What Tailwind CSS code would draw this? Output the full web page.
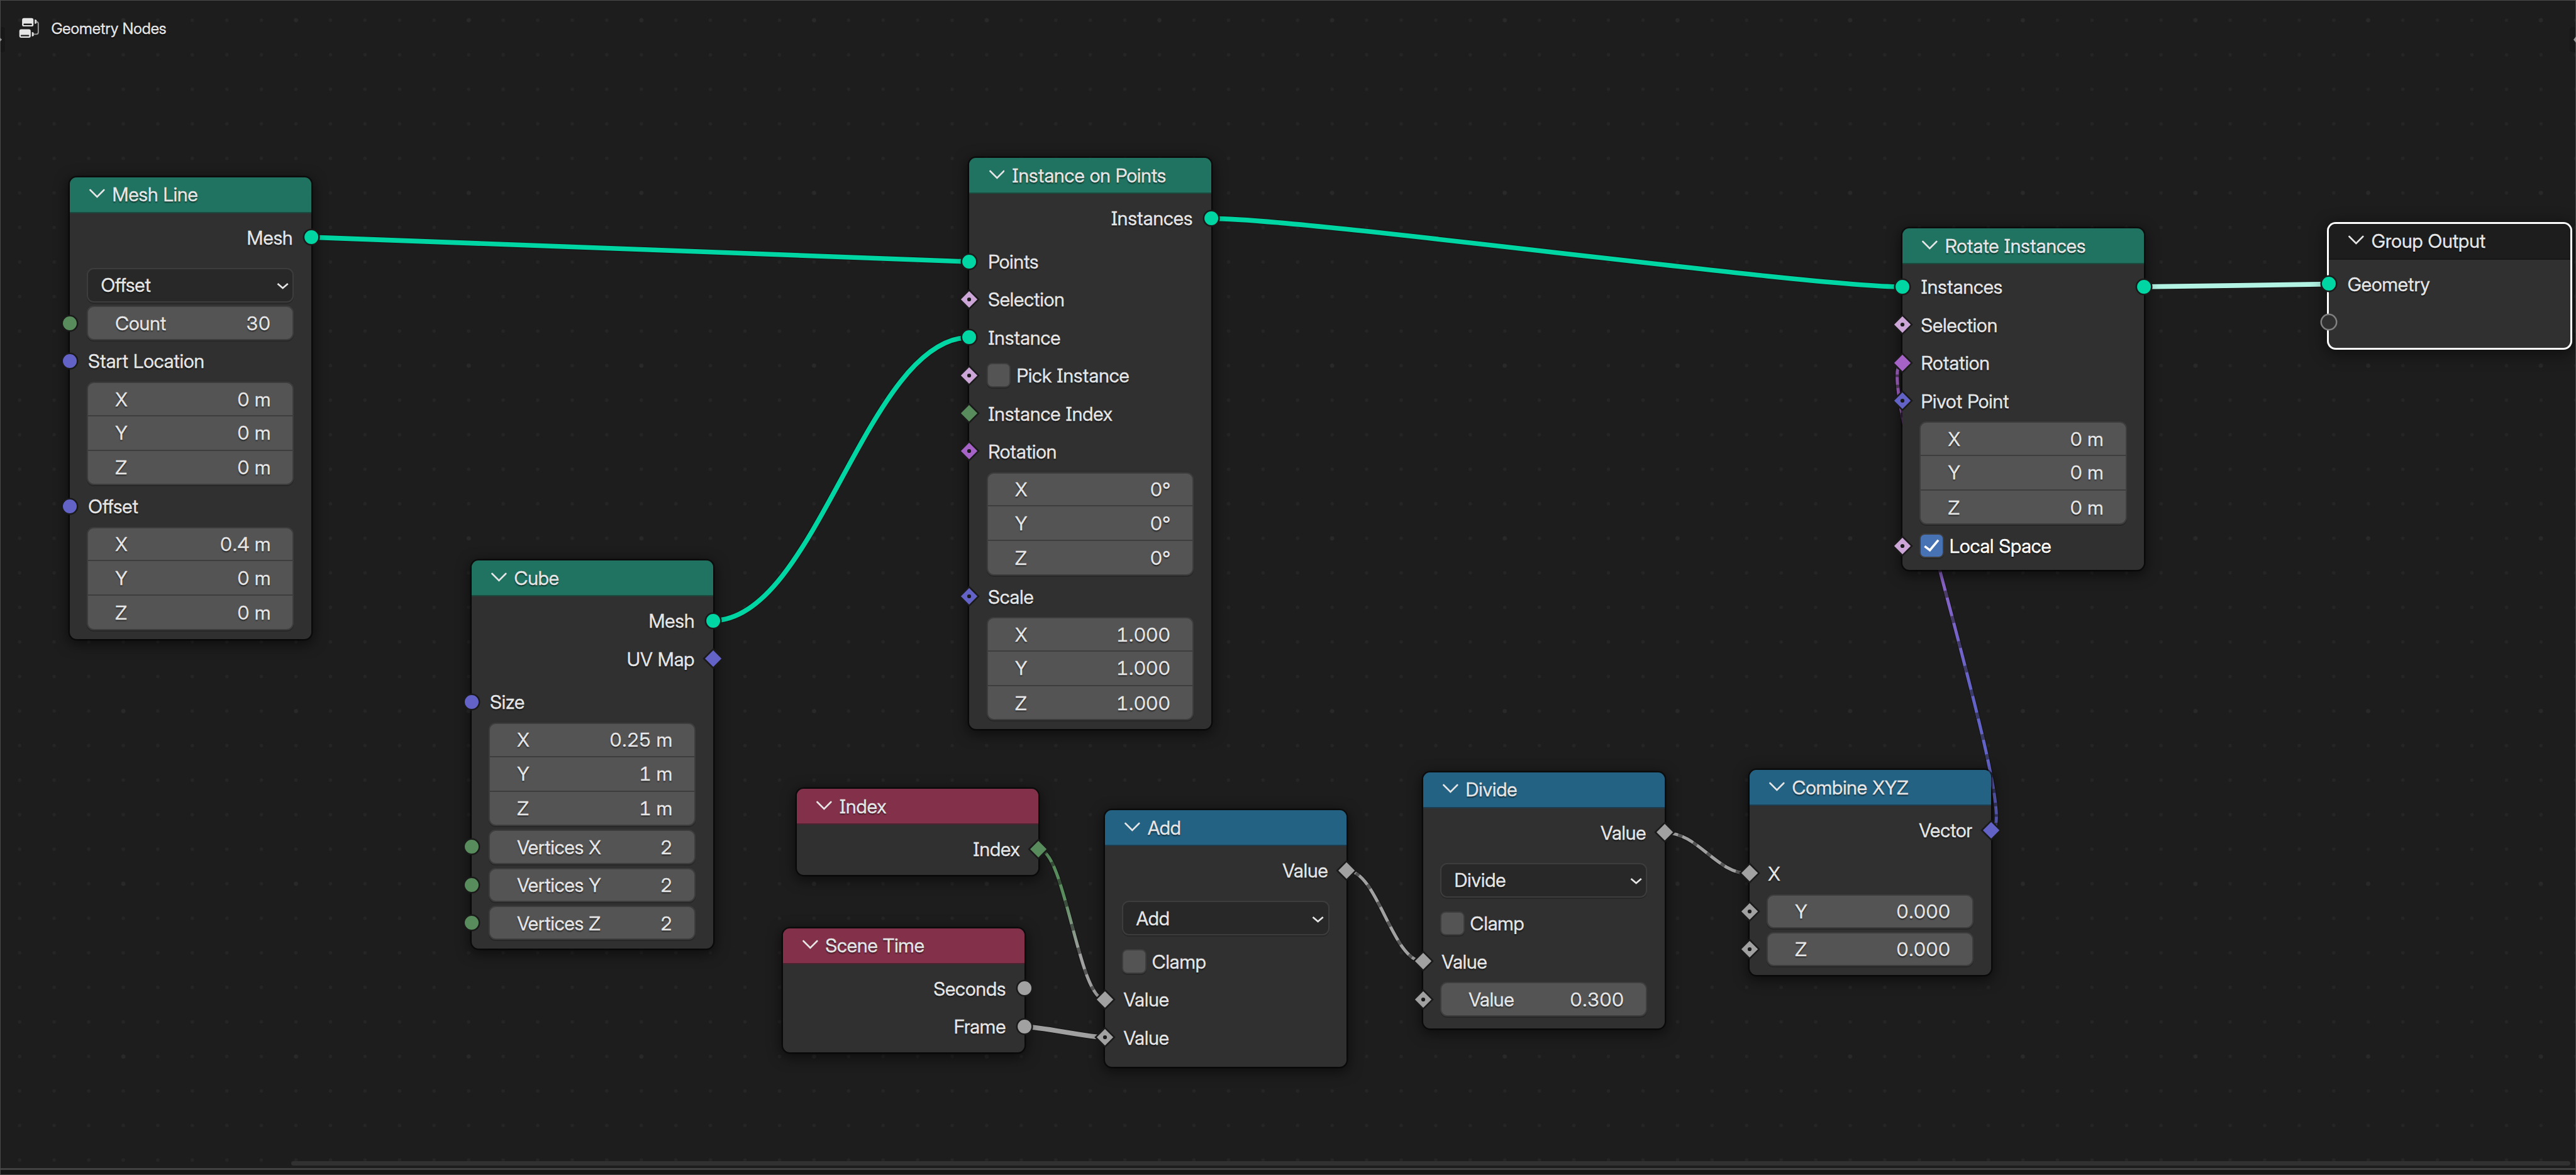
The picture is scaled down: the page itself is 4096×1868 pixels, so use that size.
<!DOCTYPE html>
<html lang="en" class="text-[27.46px]">
<head>
<meta charset="utf-8">
<title>Geometry Nodes</title>
<script src="https://cdn.jsdelivr.net/npm/@tailwindcss/browser@4"></script>
</head>
<body class="relative h-[1868px] w-[4096px] overflow-hidden bg-[#1d1d1d] font-['Inter_Display',Inter,sans-serif] text-[#e6e6e6] [-webkit-text-stroke:.3px_currentColor] [font-feature-settings:'cv08','tnum']">

<!-- Grid and links -->
<svg class="absolute inset-0 h-[1868px] w-[4096px]" viewBox="0 0 5516 2516" preserveAspectRatio="none">
  <defs>
    <pattern id="dots" x="5.06" y="6.3" width="73.96" height="73.96" patternUnits="userSpaceOnUse">
      <circle cx="36.98" cy="36.98" r="3.6" fill="#252525"/>
    </pattern>
    <pattern id="dots5" x="79.3" y="-141.7" width="369.75" height="369.85" patternUnits="userSpaceOnUse">
      <circle cx="184.9" cy="184.9" r="4.3" fill="#292929"/>
    </pattern>
    <linearGradient id="intToFloat" gradientUnits="userSpaceOnUse" x1="0" y1="1914" x2="0" y2="2045">
      <stop offset="0" stop-color="#598c5c"/><stop offset="1" stop-color="#a1a1a1"/>
    </linearGradient>
    <linearGradient id="vecToRot" gradientUnits="userSpaceOnUse" x1="0" y1="1482" x2="0" y2="1073">
      <stop offset="0" stop-color="#6363c7"/><stop offset="1" stop-color="#a663c7"/>
    </linearGradient>
  </defs>
  <rect width="5516" height="2500" fill="url(#dots)"/>
  <rect width="5516" height="2500" fill="url(#dots5)"/>
  <g id="links" fill="none"></g>
</svg>

<!-- Nodes -->
<main id="nodes"></main>

<!-- Breadcrumb -->
<div class="absolute left-[30px] top-[28px] flex h-[34px] items-center gap-[18px]">
  <svg class="h-[33.4px] w-[33.4px]" viewBox="40 38 45 45">
    <rect x="46.9" y="39" width="24.4" height="18" rx="4" fill="#e6e6e6"/>
    <rect x="50" y="50.7" width="18" height="3.4" rx="1.2" fill="#1d1d1d"/>
    <rect x="41" y="63" width="24.4" height="18" rx="4" fill="#e6e6e6"/>
    <rect x="44" y="75" width="18" height="3.2" rx="1.2" fill="#1d1d1d"/>
    <path d="M74 42a4.6 4.6 0 0 1 0 9.2zM67.9 69a4.6 4.6 0 0 1 0 9.2z" fill="#e6e6e6"/>
    <path d="M76.5 47H78a3.6 3.6 0 0 1 3.6 3.6V69.5A4 4 0 0 1 77.6 73.5H70.5" fill="none" stroke="#9c9c9c" stroke-width="2.6"/>
  </svg>
  <span class="whitespace-nowrap text-[24.6px] leading-none [text-shadow:0_2px_2px_rgba(0,0,0,.6)]">Geometry Nodes</span>
</div>

<!-- Region toggles -->
<div class="absolute left-0 top-[43px] h-[40px] w-[8px] rounded-r-[4px] bg-[#181818]"></div>
<div class="absolute right-0 top-[43px] h-[40px] w-[10px] rounded-l-[5px] bg-[#181818]"></div>

<!-- Scrollbar -->
<div class="absolute left-[463px] top-[1846px] h-[7px] w-[3624px] rounded-full bg-[#313131]"></div>
<!-- Region borders -->
<div class="absolute left-0 top-[1857px] h-[3px] w-full bg-[#414141]"></div>
<div class="absolute left-0 top-[1860px] h-[8px] w-full bg-[#161616]"></div>
<div class="absolute inset-0 border-[1.5px] border-[#4b4b4b]"></div>
<svg class="absolute left-0 top-[58px] h-[10px] w-[3px]" viewBox="0 0 3 10"><path d="M0 2l3 3-3 3z" fill="#999"/></svg>
<svg class="absolute right-0 top-[58px] h-[10px] w-[4px]" viewBox="0 0 4 10"><path d="M4 0L0 5l4 5z" fill="#999"/></svg>

<script>
const S = 4096 / 5516;
const C = { geo: '#00d6a3', int: '#598c5c', vec: '#6363c7', bool: '#cca6d6', rot: '#a663c7', float: '#a1a1a1' };

/* ---- sockets: o circle, d diamond, f diamond with field dot, x virtual ---- */
function socket(spec, side) {
  if (!spec) return '';
  const [shape, kind] = spec.split(':');
  const fill = C[kind];
  const body = {
    o: `<circle r="16.5" fill="${fill}" stroke="#1a1a1a" stroke-width="3.4"/>`,
    d: `<path d="M0-20.2L20.2 0 0 20.2-20.2 0z" fill="${fill}" stroke="#1a1a1a" stroke-width="3.4"/>`,
    f: `<path d="M0-20.2L20.2 0 0 20.2-20.2 0z" fill="${fill}" stroke="#1a1a1a" stroke-width="3.4"/><circle r="4.2" fill="#1a1a1a"/>`,
    x: `<circle r="16.5" fill="#303030" stroke="#808080" stroke-width="3.4"/>`
  }[shape];
  const pos = side === 'l' ? 'left-0 -translate-x-1/2' : 'right-0 translate-x-1/2';
  return `<svg class="absolute top-1/2 z-10 h-[37.1px] w-[37.1px] -translate-y-1/2 ${pos}" viewBox="-25 -25 50 50">${body}</svg>`;
}

const cell = (l, v, extra = 'pt-[.04rem]') => `<div class="flex h-[2rem] items-center justify-between pl-[1.58rem] pr-[1.28rem] ${extra}"><span>${l}</span><span>${v}</span></div>`;
const line = 'border-b-2 border-[#3d3d3d]';
const box = 'rounded-[.4rem] border-[2.3px] border-[#3d3d3d] shadow-[0_2px_0_rgba(0,0,0,.18)]';
const check = (label, on) => `
  <div class="flex items-center gap-[.33rem] pl-[1rem]">
    <span class="block h-[1.4rem] w-[1.4rem] rounded-[.3rem] border-[2.3px] border-[#3d3d3d] shadow-[0_2px_0_rgba(0,0,0,.18)] ${on ? 'bg-[#4772b3]' : 'bg-[#545454]'}">
      ${on ? '<svg class="h-full w-full overflow-visible" viewBox="3 3 46 46"><path d="M11.5 27.5L22.5 36 40.5 14.5" fill="none" stroke="#fff" stroke-width="4.8"/></svg>' : ''}
    </span>
    <span class="pt-[.04rem] ${on ? 'text-white' : ''}">${label}</span>
  </div>`;

const kinds = {
  label: r => `<div class="w-full px-[1.08rem] pt-[.04rem]">${r.t}</div>`,
  out:   r => `<div class="w-full px-[1.08rem] pt-[.04rem] text-right">${r.t}</div>`,
  field: r => `<div class="mx-[.99rem] w-[12rem] bg-[#545454] ${box}"><div class="-my-[2.3px]">${cell(r.t, r.v)}</div></div>`,
  vec:   r => `<div class="mx-[.99rem] w-[12rem] bg-[#545454] ${box}"><div class="-my-[2.3px]">${cell('X', r.v[0], 'pt-[.1rem] ' + line)}${cell('Y', r.v[1], line)}${cell('Z', r.v[2], 'pb-[.04rem]')}</div></div>`,
  menu:  r => `<div class="mx-[.99rem] flex h-[2rem] w-[12rem] items-center justify-between bg-[#282828] pl-[.75rem] pr-[.24rem] ${box}"><span>${r.t}</span><svg class="mt-[.1rem] h-[.46rem] w-[.7rem]" viewBox="0 0 26 17"><path d="M2 4l11 9.5L24 4" fill="none" stroke="#e6e6e6" stroke-width="3.7"/></svg></div>`,
  check: r => check(r.t, r.on)
};

const row = r => `<div class="relative flex items-center ${r.k === 'vec' ? 'h-[6rem]' : 'h-[2rem]'} ${r.mt || ''}">${socket(r.l, 'l')}${kinds[r.k](r)}${socket(r.r, 'r')}</div>`;

const head = {
  green: 'bg-[#1f7360] border-[#1b4a3f]',
  red:   'bg-[#83314a] border-[#4d2331]',
  blue:  'bg-[#246283] border-[#1d3e50]',
  dark:  'bg-[#1d1d1d] border-[#181818]'
};
const ring = {
  normal: 'shadow-[0_0_0_2.4px_rgba(0,0,0,.5),0_5px_20px_4px_rgba(0,0,0,.5)]',
  active: 'shadow-[0_0_0_3px_#fff,0_5px_24px_6px_rgba(0,0,0,.45)]'
};

const G5 = 'mt-[.3rem]', G8 = 'mt-[.57rem]';
const nodes = [
  { x: 149.1, y: 379.2, t: 'Mesh Line', c: 'green', pad: 'pt-[.4rem] pb-[.5rem]', rows: [
    { k: 'out', t: 'Mesh', r: 'o:geo' },
    { k: 'menu', t: 'Offset', mt: G8 },
    { k: 'field', t: 'Count', v: '30', l: 'o:int' },
    { k: 'label', t: 'Start Location', l: 'o:vec' },
    { k: 'vec', v: ['0 m', '0 m', '0 m'] },
    { k: 'label', t: 'Offset', l: 'o:vec' },
    { k: 'vec', v: ['0.4 m', '0 m', '0 m'] } ] },
  { x: 1009.5, y: 1200.2, t: 'Cube', c: 'green', pad: 'pt-[.4rem] pb-[.5rem]', rows: [
    { k: 'out', t: 'Mesh', r: 'o:geo' },
    { k: 'out', t: 'UV Map', r: 'd:vec' },
    { k: 'label', t: 'Size', l: 'o:vec', mt: G5 },
    { k: 'vec', v: ['0.25 m', '1 m', '1 m'] },
    { k: 'field', t: 'Vertices X', v: '2', l: 'o:int' },
    { k: 'field', t: 'Vertices Y', v: '2', l: 'o:int' },
    { k: 'field', t: 'Vertices Z', v: '2', l: 'o:int' } ] },
  { x: 2075.9, y: 338.5, t: 'Instance on Points', c: 'green', pad: 'pt-[.4rem] pb-[.5rem]', rows: [
    { k: 'out', t: 'Instances', r: 'o:geo' },
    { k: 'label', t: 'Points', l: 'o:geo', mt: G5 },
    { k: 'label', t: 'Selection', l: 'f:bool' },
    { k: 'label', t: 'Instance', l: 'o:geo' },
    { k: 'check', t: 'Pick Instance', l: 'f:bool' },
    { k: 'label', t: 'Instance Index', l: 'd:int' },
    { k: 'label', t: 'Rotation', l: 'f:rot' },
    { k: 'vec', v: ['0°', '0°', '0°'] },
    { k: 'label', t: 'Scale', l: 'f:vec' },
    { k: 'vec', v: ['1.000', '1.000', '1.000'] } ] },
  { x: 1706.3, y: 1689, t: 'Index', c: 'red', pad: 'pt-[.4rem] pb-[.5rem]', rows: [
    { k: 'out', t: 'Index', r: 'd:int' } ] },
  { x: 1676.1, y: 1987.5, t: 'Scene Time', c: 'red', pad: 'pt-[.4rem] pb-[.5rem]', rows: [
    { k: 'out', t: 'Seconds', r: 'o:float' },
    { k: 'out', t: 'Frame', r: 'o:float' } ] },
  { x: 2365.9, y: 1734.9, t: 'Add', c: 'blue', pad: 'pt-[.4rem] pb-[.7rem]', rows: [
    { k: 'out', t: 'Value', r: 'd:float' },
    { k: 'menu', t: 'Add', mt: G8 },
    { k: 'check', t: 'Clamp', mt: G5 },
    { k: 'label', t: 'Value', l: 'd:float' },
    { k: 'label', t: 'Value', l: 'f:float' } ] },
  { x: 3047.1, y: 1653.2, t: 'Divide', c: 'blue', pad: 'pt-[.4rem] pb-[.7rem]', rows: [
    { k: 'out', t: 'Value', r: 'd:float' },
    { k: 'menu', t: 'Divide', mt: G8 },
    { k: 'check', t: 'Clamp', mt: G5 },
    { k: 'label', t: 'Value', l: 'd:float' },
    { k: 'field', t: 'Value', v: '0.300', l: 'f:float' } ] },
  { x: 3745.9, y: 1648.5, t: 'Combine XYZ', c: 'blue', pad: 'pt-[.4rem] pb-[.5rem]', rows: [
    { k: 'out', t: 'Vector', r: 'd:vec' },
    { k: 'label', t: 'X', l: 'd:float', mt: G5 },
    { k: 'field', t: 'Y', v: '0.000', l: 'f:float' },
    { k: 'field', t: 'Z', v: '0.000', l: 'f:float' } ] },
  { x: 4073.6, y: 489, t: 'Rotate Instances', c: 'green', pad: 'pt-[.3rem] pb-[.4rem]', rows: [
    { k: 'label', t: 'Instances', l: 'o:geo', r: 'o:geo' },
    { k: 'label', t: 'Selection', l: 'f:bool' },
    { k: 'label', t: 'Rotation', l: 'd:rot' },
    { k: 'label', t: 'Pivot Point', l: 'f:vec' },
    { k: 'vec', v: ['0 m', '0 m', '0 m'] },
    { k: 'check', t: 'Local Space', on: true, l: 'f:bool' } ] },
  { x: 4986.8, y: 479, t: 'Group Output', c: 'dark', active: true, pad: 'pt-[.4rem] pb-[.5rem]', rows: [
    { k: 'label', t: 'Geometry', l: 'o:geo' },
    { k: 'label', t: '', l: 'x:none' } ] }
];

document.getElementById('nodes').innerHTML = nodes.map(n => `
  <section class="absolute w-[14rem] whitespace-nowrap rounded-[.4rem] bg-[#303030] text-[1.1rem] leading-none [text-shadow:0_2px_2px_rgba(0,0,0,.6)] ${n.active ? ring.active : ring.normal}" style="left:${n.x * S}px;top:${n.y * S}px">
    <header class="flex h-[2.08rem] items-center gap-[.43rem] rounded-t-[.4rem] border-b-[2.3px] pl-[1.14rem] ${head[n.c]}">
      <svg class="mb-[.08rem] h-[.57rem] w-[.9rem]" viewBox="0 0 34 21"><path d="M2 2.5l15 15 15-15" fill="none" stroke="#e6e6e6" stroke-width="3.6" stroke-linecap="round"/></svg>
      <h2>${n.t}</h2>
    </header>
    <div class="flex flex-col gap-[.2rem] ${n.pad}">${n.rows.map(row).join('')}</div>
  </section>`).join('');

/* ---- links: cubic noodles; field links carry dashes spaced evenly along t ---- */
const links = [
  { a: [666.8, 508], b: [2075.9, 560.3], c: C.geo, w: 10.2 },
  { a: [1527.2, 1328.7], b: [2075.9, 722.6], c: C.geo, w: 10.2 },
  { a: [2593.5, 467.9], b: [4073.6, 614.1], c: C.geo, w: 10.2 },
  { a: [4591.7, 614.1], b: [4986.8, 608.3], c: '#b2f3e4', w: 10.4 },
  { a: [2193.7, 2198.3], b: [2365.9, 2221.5], c: C.float, w: 10.2 },
  { a: [2223.9, 1818.7], b: [2365.9, 2140.3], c: 'url(#intToFloat)', w: 6.8, n: 9.39, p: .813 },
  { a: [2884.3, 1864.1], b: [3047.1, 2058.9], c: C.float, w: 6.8, n: 6.86, p: .84 },
  { a: [3564.9, 1782.9], b: [3745.9, 1870.7], c: C.float, w: 6.8, n: 5.58, p: .915 },
  { a: [4263.6, 1777.8], b: [4073.6, 776.8], c: 'url(#vecToRot)', w: 6.8, n: 27.7, p: .94 }
];
let out = '';
for (const l of links) {
  const [x0, y0] = l.a, [x3, y3] = l.b;
  const dx = Math.abs(x3 - x0), dy = Math.abs(y3 - y0);
  const h = .4 * dx * Math.min(1, dy / dx * 3.5);
  const P = t => {
    const u = 1 - t, a = u * u * u, b = 3 * u * u * t, c = 3 * u * t * t, d = t * t * t;
    return [a * x0 + b * (x0 + h) + c * (x3 - h) + d * x3, (a + b) * y0 + (c + d) * y3];
  };
  const d = `M${x0} ${y0}C${x0 + h} ${y0} ${x3 - h} ${y3} ${x3} ${y3}`;
  out += `<path d="${d}" stroke="#141414" stroke-width="${l.w + 3}"/><path d="${d}" stroke="${l.c}" stroke-width="${l.w}"/>`;
  if (l.n) for (let k = -1; k < l.n; k++) {
    const t0 = Math.max(0, (k + l.p - .137) / l.n), t1 = Math.min(1, (k + l.p + .137) / l.n);
    if (t1 <= t0) continue;
    const pts = [0, .25, .5, .75, 1].map(f => P(t0 + (t1 - t0) * f).map(v => v.toFixed(1)).join(' '));
    out += `<path d="M${pts.join('L')}" stroke="#1b1b1b" stroke-opacity=".55" stroke-width="${l.w}"/>`;
  }
}
document.getElementById('links').innerHTML = out;
</script>
</body>
</html>
